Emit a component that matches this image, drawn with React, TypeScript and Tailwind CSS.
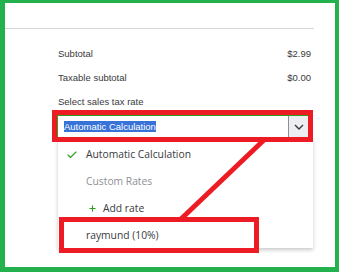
import { Check, Plus } from "lucide-react"

const arial = { fontFamily: '"Liberation Sans", Arial, sans-serif' }
const qbo = { fontFamily: '"Open Sans", "Noto Sans", sans-serif' }

function SummaryRow({ label, value }: { label: string; value?: string }) {
  return (
    <div className="flex justify-between items-center h-[12px] text-[9.5px] text-[#393a3d]">
      <span>{label}</span>
      {value && <span>{value}</span>}
    </div>
  )
}

export default function App() {
  return (
    <div
      className="relative w-[339px] h-[272px] bg-white border-[#22b14c] border-t-[3px] border-l-[5px] border-r-[4px] border-b-[5px] overflow-hidden"
      style={arial}
    >
      {/* Header strip */}
      <div className="h-[25px]" />
      <div className="h-px w-[309px] bg-[#d4d7dc]" />

      {/* Totals */}
      <div className="pl-[53px] pr-[24px] pt-[19px] flex flex-col">
        <div className="flex flex-col gap-[12px]">
          <SummaryRow label="Subtotal" value="$2.99" />
          <SummaryRow label="Taxable subtotal" value="$0.00" />
          <SummaryRow label="Select sales tax rate" />
        </div>

        {/* Tax rate select */}
        <div className="mt-[7px] -ml-px w-[252px] h-[23px] flex border border-[#2ca01c] bg-white">
          <div className="flex-1 flex items-center pl-[6px] text-[9.5px]">
            <span className="bg-[#3672d8] text-white leading-[11px]">Automatic Calculation</span>
          </div>
          <div className="w-[20px] flex items-center justify-center border-l border-[#8d9096] bg-[#eceef1]">
            <svg width="10" height="6" viewBox="0 0 10 6" fill="none">
              <path d="M1 1l4 4 4-4" stroke="#393a3d" strokeWidth="1.4" />
            </svg>
          </div>
        </div>

        {/* Dropdown menu */}
        <div
          className="w-[255px] h-[110px] pt-[3px] bg-white shadow-[0_2px_4px_rgba(0,0,0,0.22)] text-[10.3px] text-[#393a3d]"
          style={qbo}
        >
          <div className="h-[27px] flex items-center">
            <Check className="ml-[8px] w-[12px] h-[12px] text-[#2ca01c]" strokeWidth={2.2} />
            <span className="ml-[8px]">Automatic Calculation</span>
          </div>
          <div className="h-[27px] flex items-center pl-[28px] text-[#8d9096]">Custom Rates</div>
          <div className="h-[27px] flex items-center">
            <Plus className="ml-[30px] w-[9px] h-[9px] text-[#2ca01c]" strokeWidth={3} />
            <span className="ml-[6px]">Add rate</span>
          </div>
          <div className="h-[27px] flex items-center pl-[28px]">raymund (10%)</div>
        </div>
      </div>

      {/* Annotations */}
      <div className="absolute left-[47px] top-[107px] w-[261px] h-[32px] border-[5px] border-[#ed1c24]" />
      <div className="absolute left-[54px] top-[214px] w-[200px] h-[36px] border-[5px] border-[#ed1c24]" />
      <svg className="absolute left-0 top-0" width="330" height="264" viewBox="0 0 330 264">
        <line x1="260" y1="136" x2="176" y2="216" stroke="#ed1c24" strokeWidth="5" />
      </svg>
    </div>
  )
}
